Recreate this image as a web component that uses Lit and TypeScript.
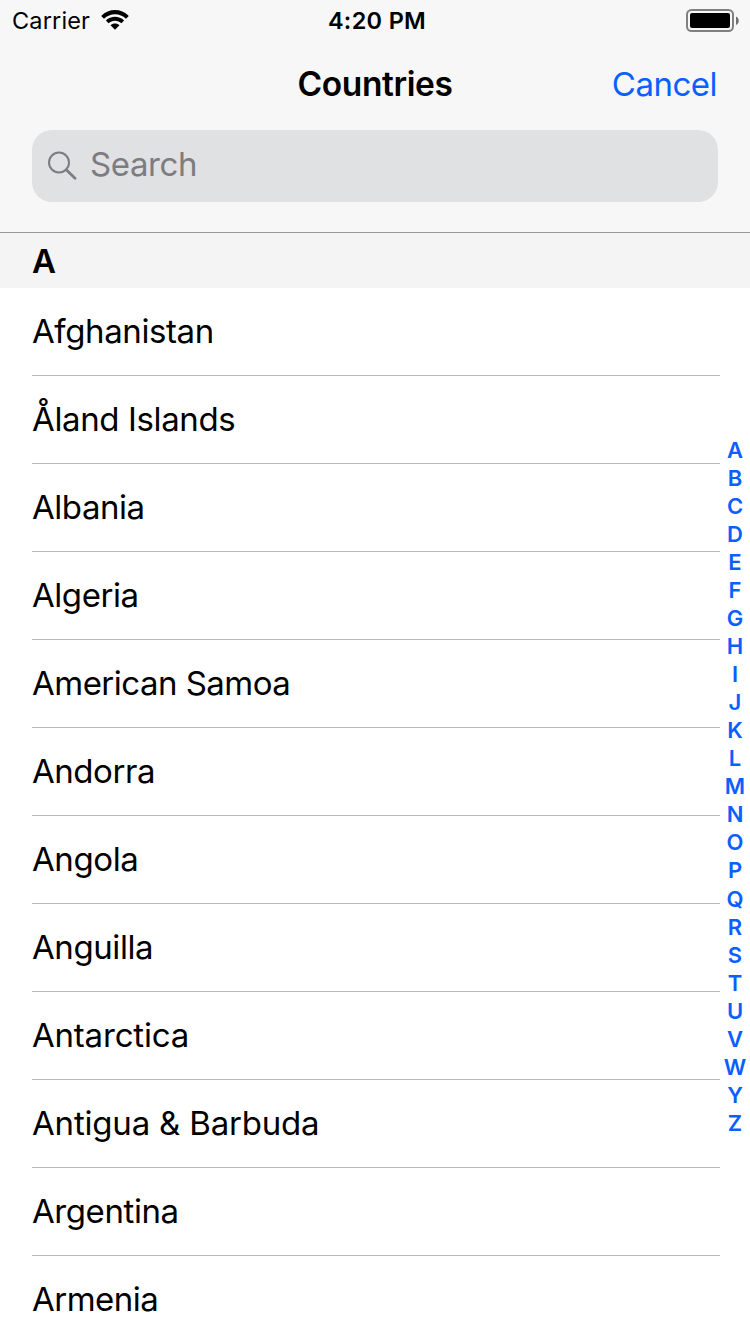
import { LitElement, html, css } from "lit";
import { customElement } from "lit/decorators.js";
import { styleMap } from "lit/directives/style-map.js";

// Each entry pairs a country name with its letter spacing in pixels.
const COUNTRIES: [string, number][] = [
  ["Afghanistan", -0.4], ["Åland Islands", -0.38], ["Albania", -0.45], ["Algeria", -0.45],
  ["American Samoa", -0.52], ["Andorra", -0.45], ["Angola", -0.4], ["Anguilla", -0.42],
  ["Antarctica", -0.2], ["Antigua & Barbuda", -0.19], ["Argentina", -0.42], ["Armenia", -0.5],
];
const LETTERS = [..."ABCDEFGHIJKLMNOPQRSTUVWYZ"];

@customElement("status-bar")
class StatusBar extends LitElement {
  static styles = css`
    :host { display: grid; grid-template-columns: 1fr auto 1fr; align-items: center; height: 40px; padding: 0 11px 0 12px; box-sizing: border-box; }
    .left { display: flex; align-items: center; gap: 11px; font-size: 23.5px; letter-spacing: 0.15px; }
    .time { padding-left: 3px; font-size: 23.5px; font-weight: 600; letter-spacing: 0.3px; }
    .right { display: flex; justify-content: flex-end; padding-top: 1px; }
    svg { display: block; }
  `;
  render() {
    return html`
      <div class="left"><span>Carrier</span>
        <svg width="28" height="20" viewBox="0 0 28 20">
          <path d="M0.2 5.9C8-1.9 20-1.9 27.8 5.9L25 8.7C19 2.7 9 2.7 3 8.7Z"/>
          <path d="M4.9 10.6C10 5.6 18 5.6 23.1 10.6L20.4 13.3C17 9.9 11 9.9 7.6 13.3Z"/>
          <path d="M9.5 15.2C12 12.9 16 12.9 18.5 15.2L14 19.8Z"/>
        </svg>
      </div>
      <span class="time">4:20 PM</span>
      <div class="right">
        <svg width="53" height="24" viewBox="0 0 53 24">
          <rect x="1" y="1" width="46" height="21" rx="4.5" fill="none" stroke="#808080" stroke-width="2"/>
          <rect x="4" y="4" width="40" height="15" rx="2"/>
          <path d="M50 7.5C53.7 9 53.7 14.5 50 16Z" fill="#707070"/>
        </svg>
      </div>`;
  }
}

@customElement("nav-header")
class NavHeader extends LitElement {
  static styles = css`
    :host { display: block; }
    .bar { display: grid; grid-template-columns: 1fr auto 1fr; align-items: center; height: 90px; padding: 0 33px; box-sizing: border-box; }
    .title { grid-column: 2; padding-bottom: 2px; font-size: 33.5px; font-weight: 600; letter-spacing: -0.4px; }
    .cancel { justify-self: end; padding-bottom: 2px; color: #0a60ff; font-size: 33px; letter-spacing: -0.5px; }
    .search { display: flex; align-items: center; gap: 13px; height: 72px; margin: 0 32px 30px; padding: 0 16px 2px; border-radius: 20px; box-sizing: border-box; background: #e0e1e3; color: #7c7c82; font-size: 33px; letter-spacing: -0.4px; }
    .search span { padding-bottom: 2px; }
    svg { display: block; }
  `;
  render() {
    return html`
      <div class="bar"><span class="title">Countries</span><span class="cancel">Cancel</span></div>
      <div class="search">
        <svg width="29" height="29" viewBox="0 0 29 29" fill="none" stroke="currentColor">
          <circle cx="11" cy="11.5" r="10" stroke-width="2"/>
          <path d="M18.5 19L27 27.2" stroke-width="2.8" stroke-linecap="round"/>
        </svg>
        <span>Search</span>
      </div>`;
  }
}

@customElement("app-root")
class AppRoot extends LitElement {
  static styles = css`
    :host { display: block; position: relative; height: 1334px; overflow: hidden; background: #fff; color: #000; font-family: Inter, "Liberation Sans", sans-serif; }
    .top { height: 232px; background: #f7f7f7; border-bottom: 1px solid #98989a; }
    .section { display: flex; align-items: center; height: 55px; padding: 0 32px; box-sizing: border-box; background: #f4f4f4; font-size: 33px; font-weight: 600; }
    .list { margin: 0 30px 0 32px; }
    .row { display: flex; align-items: center; height: 88px; padding-bottom: 2px; box-sizing: border-box; border-bottom: 1px solid #bcbbc0; font-size: 33px; }
    .index { position: absolute; right: 0; top: 436px; width: 30px; display: flex; flex-direction: column; align-items: center; color: #0a60ff; font-size: 22px; font-weight: 600; line-height: 28px; }
    .index span:nth-child(17) { margin-top: 1px; }
  `;
  render() {
    return html`
      <div class="top"><status-bar></status-bar><nav-header></nav-header></div>
      <div class="section">A</div>
      <div class="list">${COUNTRIES.map(([name, tracking]) => html`<div class="row" style=${styleMap({ letterSpacing: `${tracking}px` })}>${name}</div>`)}</div>
      <div class="index">${LETTERS.map((letter) => html`<span>${letter}</span>`)}</div>`;
  }
}
